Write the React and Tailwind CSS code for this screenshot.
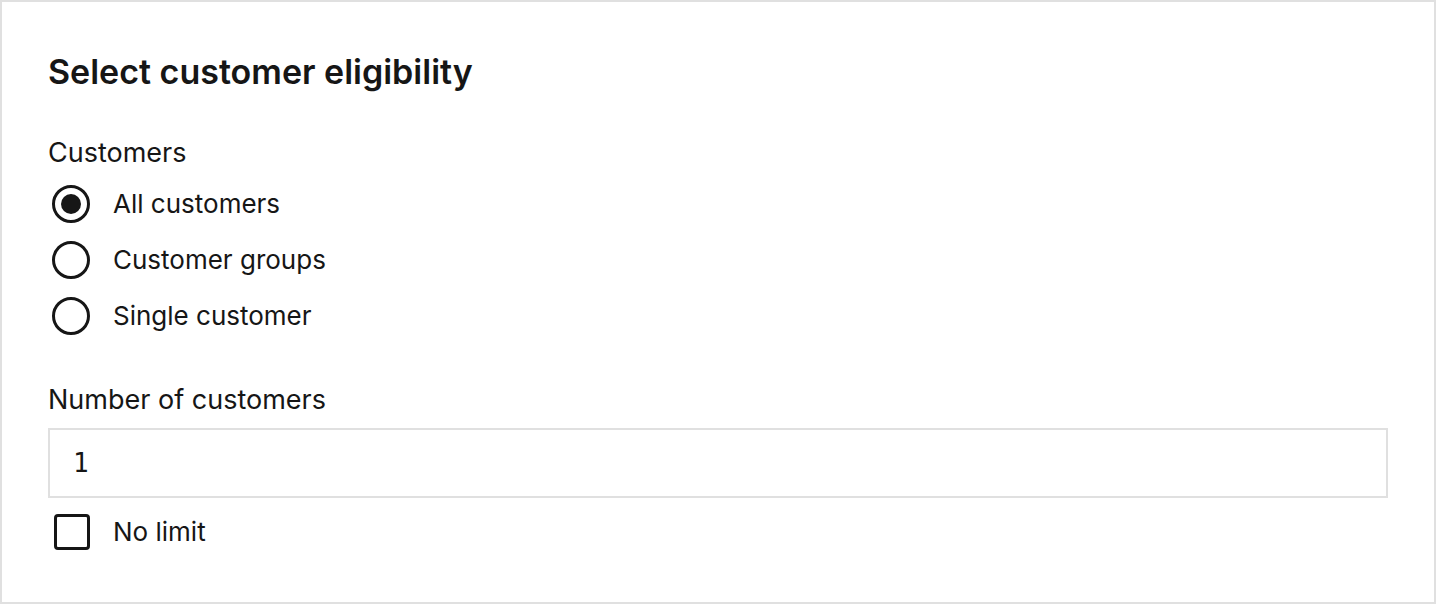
import React, { useState } from 'react';

const RadioRow = ({ label, checked, onSelect }) => (
  <label className="flex items-center h-[56px] cursor-pointer" onClick={onSelect}>
    <span className="w-[65px] h-full flex items-center">
      <span className="ml-[4px] w-[38px] h-[38px] rounded-full border-[3px] border-[#161616] flex items-center justify-center">
        {checked && <span className="w-[20px] h-[20px] rounded-full bg-[#161616]"></span>}
      </span>
    </span>
    <span className="text-[26px] leading-[32px] text-[#161616]">{label}</span>
  </label>
);

const App = () => {
  const [selected, setSelected] = useState('all');
  const [count, setCount] = useState('1');
  const [noLimit, setNoLimit] = useState(false);

  return (
    <div
      className="w-[1436px] h-[604px] bg-white border-2 border-[#e0e0e0] pl-[46px] pr-[46px] pt-[50px]"
      style={{ fontFamily: 'Inter, "Noto Sans", sans-serif' }}
    >
      <h2 className="h-[40px] leading-[40px] text-[34px] font-semibold text-[#161616]">
        Select customer eligibility
      </h2>

      <div className="mt-[45px] h-[32px] leading-[32px] text-[27px] text-[#161616]">Customers</div>

      <div className="mt-[7px] flex flex-col">
        <RadioRow label="All customers" checked={selected === 'all'} onSelect={() => setSelected('all')} />
        <RadioRow label="Customer groups" checked={selected === 'groups'} onSelect={() => setSelected('groups')} />
        <RadioRow label="Single customer" checked={selected === 'single'} onSelect={() => setSelected('single')} />
      </div>

      <div className="mt-[40px] h-[32px] leading-[32px] text-[27px] text-[#161616]">Number of customers</div>

      <input
        type="text"
        value={count}
        onChange={(e) => setCount(e.target.value)}
        className="mt-[12px] block w-full h-[70px] border-2 border-[#e0e0e0] bg-white px-[23px] text-[26px] text-[#161616] outline-none"
        style={{ fontFamily: '"DejaVu Sans Mono", "Liberation Mono", monospace' }}
      />

      <label className="mt-[16px] flex items-center h-[36px] cursor-pointer" onClick={() => setNoLimit(!noLimit)}>
        <span className="w-[65px] flex items-center">
          <span className="ml-[6px] w-[36px] h-[36px] rounded-[4px] border-[3px] border-[#161616] flex items-center justify-center">
            {noLimit && <span className="text-[24px] leading-none">✓</span>}
          </span>
        </span>
        <span className="text-[26px] leading-[32px] text-[#161616]">No limit</span>
      </label>
    </div>
  );
};

export default App;
